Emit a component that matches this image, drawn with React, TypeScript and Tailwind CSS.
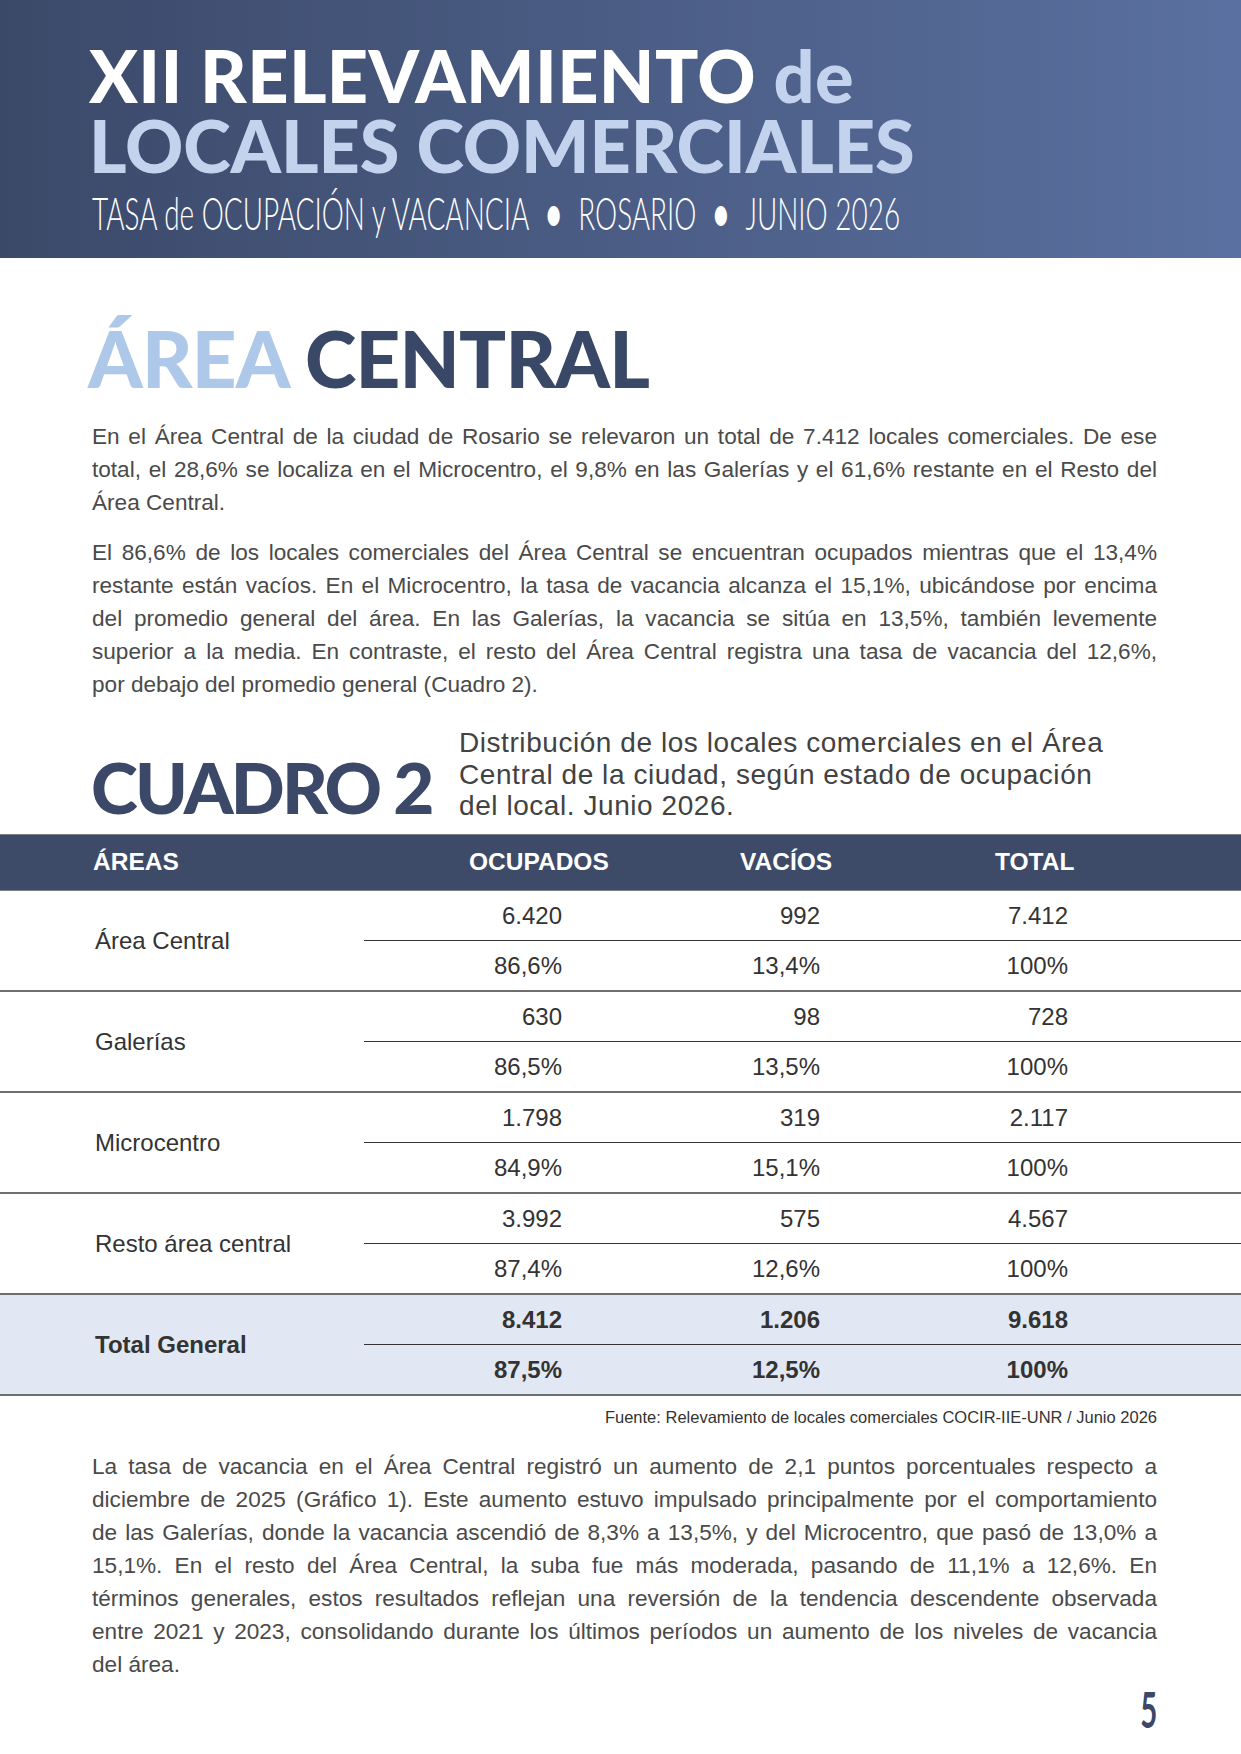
import React from "react";

const J = ({ lines }: { lines: string[] }) => (
  <p className="text-[22.6px] leading-[33px] text-[#4a4a4a]">
    {lines.map((l, i) => (
      <span
        key={i}
        className={i < lines.length - 1 ? "block whitespace-nowrap [text-align-last:justify] text-justify" : "block whitespace-nowrap"}
      >
        {l}
      </span>
    ))}
  </p>
);

type Row = { label: string; n: string[]; p: string[]; bold?: boolean };

const rows: Row[] = [
  { label: "Área Central", n: ["6.420", "992", "7.412"], p: ["86,6%", "13,4%", "100%"] },
  { label: "Galerías", n: ["630", "98", "728"], p: ["86,5%", "13,5%", "100%"] },
  { label: "Microcentro", n: ["1.798", "319", "2.117"], p: ["84,9%", "15,1%", "100%"] },
  { label: "Resto área central", n: ["3.992", "575", "4.567"], p: ["87,4%", "12,6%", "100%"] },
  { label: "Total General", n: ["8.412", "1.206", "9.618"], p: ["87,5%", "12,5%", "100%"], bold: true },
];

const Cells = ({ v }: { v: string[] }) => (
  <>
    <div className="w-[198px] text-right">{v[0]}</div>
    <div className="w-[258px] text-right">{v[1]}</div>
    <div className="w-[248px] text-right">{v[2]}</div>
  </>
);

export default function App() {
  return (
    <div className="w-[1241px] h-[1754px] bg-white overflow-hidden font-['Liberation_Sans',Arial,sans-serif]">
      <header className="h-[258px] bg-linear-to-r from-[#3b4969] via-[#4b5d85] to-[#5a70a0] pl-[89px] pt-[40px]">
        <div className="h-[70px] font-['Lato',sans-serif] font-black text-[72px] leading-[70px] tracking-[0.005em] text-white whitespace-nowrap">
          XII RELEVAMIENTO <span className="text-[#c3d3ee]">de</span>
        </div>
        <div className="h-[70px] font-['Lato',sans-serif] font-black text-[72px] leading-[70px] tracking-[-0.001em] text-[#c3d3ee] whitespace-nowrap">
          LOCALES COMERCIALES
        </div>
        <div className="mt-[8px] h-[50px] font-['Lato',sans-serif] font-light text-[46px] leading-[50px] text-white whitespace-nowrap pl-[3px]">
          <span className="inline-block origin-left scale-x-[0.607]">
            TASA de OCUPACIÓN y VACANCIA<span className="mx-[27px] font-bold">•</span>ROSARIO<span className="mx-[27px] font-bold">•</span>JUNIO 2026
          </span>
        </div>
      </header>

      <section className="pl-[92px] pr-[84px]">
        <h1 className="mt-[60px] -ml-[4px] font-['Lato',sans-serif] font-black text-[78px] leading-[80px] tracking-[-0.01em] whitespace-nowrap">
          <span className="text-[#adc8e9]">ÁREA</span> <span className="text-[#3a4868]">CENTRAL</span>
        </h1>
        <div className="mt-[22px]">
          <J
            lines={[
              "En el Área Central de la ciudad de Rosario se relevaron un total de 7.412 locales comerciales. De ese",
              "total, el 28,6% se localiza en el Microcentro, el 9,8% en las Galerías y el 61,6% restante en el Resto del",
              "Área Central.",
            ]}
          />
        </div>
        <div className="mt-[17px]">
          <J
            lines={[
              "El 86,6% de los locales comerciales del Área Central se encuentran ocupados mientras que el 13,4%",
              "restante están vacíos. En el Microcentro, la tasa de vacancia alcanza el 15,1%, ubicándose por encima",
              "del promedio general del área. En las Galerías, la vacancia se sitúa en 13,5%, también levemente",
              "superior a la media. En contraste, el resto del Área Central registra una tasa de vacancia del 12,6%,",
              "por debajo del promedio general (Cuadro 2).",
            ]}
          />
        </div>
        <div className="mt-[26px] flex items-start">
          <div className="w-[368px] -ml-[1px] mt-[24px] font-['Lato',sans-serif] font-black text-[71px] leading-[71px] tracking-[-0.04em] text-[#3b4868] whitespace-nowrap">
            CUADRO 2
          </div>
          <div className="text-[28px] leading-[31.5px] tracking-[0.02em] text-[#424242] whitespace-nowrap">
            <div>Distribución de los locales comerciales en el Área</div>
            <div>Central de la ciudad, según estado de ocupación</div>
            <div>del local. Junio 2026.</div>
          </div>
        </div>
      </section>

      <div className="mt-[12px]">
        <div className="h-[57px] bg-[#3d4a68] border-y border-[#7a7f8a] flex items-center text-white font-bold text-[24.5px]">
          <div className="w-[469px] pl-[93px]">ÁREAS</div>
          <div className="w-[271px]">OCUPADOS</div>
          <div className="w-[255px]">VACÍOS</div>
          <div>TOTAL</div>
        </div>
        {rows.map((r) => (
          <div
            key={r.label}
            className={
              "flex border-b-2 border-[#6e6e6e] text-[24px] text-[#333] " +
              (r.bold ? "bg-[#e1e8f4] font-bold" : "")
            }
          >
            <div className="w-[364px] pl-[95px] flex items-center">{r.label}</div>
            <div className="flex-1 flex flex-col">
              <div className="h-[50px] border-b border-[#333] flex items-center">
                <Cells v={r.n} />
              </div>
              <div className="h-[49px] flex items-center">
                <Cells v={r.p} />
              </div>
            </div>
          </div>
        ))}
      </div>

      <section className="pl-[92px] pr-[84px]">
        <div className="mt-[11px] text-right text-[16.5px] leading-[20px] text-[#333] whitespace-nowrap">
          Fuente: Relevamiento de locales comerciales COCIR-IIE-UNR / Junio 2026
        </div>
        <div className="mt-[23px]">
          <J
            lines={[
              "La tasa de vacancia en el Área Central registró un aumento de 2,1 puntos porcentuales respecto a",
              "diciembre de 2025 (Gráfico 1). Este aumento estuvo impulsado principalmente por el comportamiento",
              "de las Galerías, donde la vacancia ascendió de 8,3% a 13,5%, y del Microcentro, que pasó de 13,0% a",
              "15,1%. En el resto del Área Central, la suba fue más moderada, pasando de 11,1% a 12,6%. En",
              "términos generales, estos resultados reflejan una reversión de la tendencia descendente observada",
              "entre 2021 y 2023, consolidando durante los últimos períodos un aumento de los niveles de vacancia",
              "del área.",
            ]}
          />
        </div>
        <div className="mt-[4px] h-[49px] text-right font-['Lato',sans-serif] font-bold text-[49px] leading-[49px] text-[#3b4868]">
          <span className="inline-block origin-right scale-x-[0.6]">5</span>
        </div>
      </section>
    </div>
  );
}
